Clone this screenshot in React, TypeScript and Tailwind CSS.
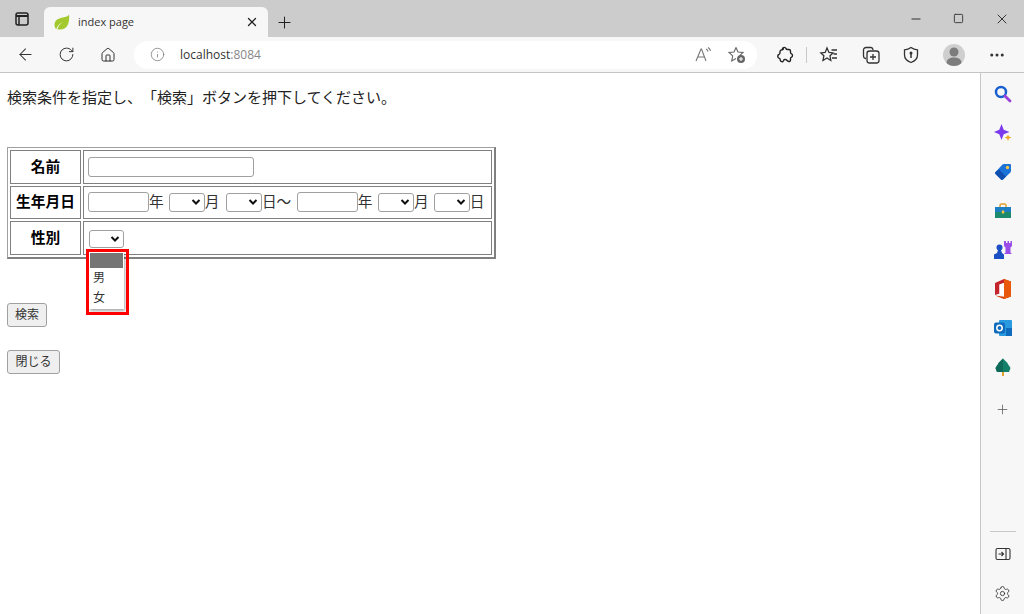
import { ArrowLeft, Ellipsis, House, Info, Minus, Plus, RotateCw, Settings, Square, X } from "lucide-react";
import type { ReactNode } from "react";

const cjk = { fontFamily: '"Liberation Sans", "Noto Sans CJK JP", sans-serif' };

function Slot(p: { className: string; children: ReactNode }) {
  return <div className={`flex shrink-0 items-center justify-center ${p.className}`}>{p.children}</div>;
}

function Leaf() {
  return (
    <svg width="16" height="16" viewBox="0 0 16 16">
      <path d="M15 .5C14 2.500 12 3 9 3.500 4 4.300.5 6.500.5 11c0 1.700.7 3.200 1.700 4.200C3 13 5 9.500 9 8 6 10 4 12.500 3.500 15.300 8 16.300 12.500 14.500 14.200 10c.9-3 1.300-6 .8-9.500z" fill="#a3c92e" />
    </svg>
  );
}

function TabActions() {
  return (
    <svg width="16" height="16" viewBox="0 0 16 16" fill="none" stroke="#222" strokeWidth="1.500">
      <rect x="2" y="2" width="12" height="12" rx="2" />
      <path d="M2 5h12" strokeWidth="2" />
      <path d="M5 5v9" />
    </svg>
  );
}

function ReadAloud() {
  return (
    <svg width="18" height="18" viewBox="0 0 18 18" fill="none" stroke="#777" strokeWidth="1.100">
      <path d="M2 15 7 3h.5l4.500 12M4 11h6.500" />
      <path d="M12 3c1 .5 1.600 1.300 2 2.500M14 1.500c1.400.8 2.200 2 2.500 3.500" />
    </svg>
  );
}

function FavAdd() {
  return (
    <svg width="20" height="20" viewBox="0 0 20 20" fill="none" stroke="#666" strokeWidth="1.100">
      <path d="M9 2.500 11 7l5 .5-3.600 3.300" />
      <path d="M9 2.500 7 7l-5 .5 3.700 3.400L4.700 16 9 13.500" />
      <circle cx="14" cy="14" r="4" fill="#666" stroke="none" />
      <path d="M14 12v4M12 14h4" stroke="#fff" />
    </svg>
  );
}

function ExtensionIcon() {
  return (
    <svg width="20" height="20" viewBox="0 0 20 20" fill="none" stroke="#222" strokeWidth="1.400" strokeLinejoin="round">
      <path d="M7.500 3.500c.5-1.500 3-1.500 3.500 0 .2.700.8 1 1.500 1h1.500c.8 0 1.500.7 1.500 1.500v1.500c0 .7.300 1.200 1 1.400 1.300.5 1.300 2.700 0 3.200-.7.200-1 .7-1 1.400V15c0 1-.8 1.700-1.700 1.500-1.200-.3-1.800-.8-2.300-1.500-.7-1-2.800-.7-3 .7-.2.900-1 1.300-1.800 1-.9-.3-1.500-1-1.500-2 0-.9-.5-1.300-1.200-1.500-1.500-.5-1.700-3-.2-3.700.8-.4 1.400-1 1.200-2-.2-1.500.5-2.500 2-2.700.8-.1 1-.3 1.500-.8z" />
    </svg>
  );
}

function FavList() {
  return (
    <svg width="20" height="20" viewBox="0 0 20 20" fill="none" stroke="#333" strokeWidth="1.300">
      <path d="M8 3 10 7.500l4 .4-3 2.800.8 4.800L8 13l-4 2.500.9-4.800-3-2.800 4.300-.4z" />
      <path d="M12.500 5H18M14.500 9H18M13 13h5" />
    </svg>
  );
}

function Collections() {
  return (
    <svg width="20" height="20" viewBox="0 0 20 20" fill="none" stroke="#333" strokeWidth="1.300">
      <path d="M5 13.500A2.500 2.500 0 0 1 2.500 11V5A2.500 2.500 0 0 1 5 2.500h5A2.500 2.500 0 0 1 12 5" />
      <rect x="6" y="6" width="12" height="12" rx="2.500" />
      <path d="M12 9v6M9 12h6" />
    </svg>
  );
}

function Shield() {
  return (
    <svg width="20" height="20" viewBox="0 0 20 20" fill="none" stroke="#333" strokeWidth="1.300">
      <path d="M10 2.500c2 1.500 4 2.200 6.500 2.300V10c0 3.500-2.500 6-6.500 7.500C6 16 3.500 13.500 3.500 10V4.800C6 4.700 8 4 10 2.500z" />
      <path d="M10 8v5" strokeWidth="1.500" />
      <circle cx="10" cy="8" r="1.500" fill="#333" stroke="none" />
    </svg>
  );
}

function Avatar() {
  return (
    <svg width="22" height="22" viewBox="0 0 22 22">
      <circle cx="11" cy="11" r="11" fill="#cfcfcf" />
      <circle cx="11" cy="8" r="4.500" fill="#7d7d7d" />
      <path d="M3.500 19c0-4 3.500-5.500 7.500-5.500s7.500 1.500 7.500 5.500c-2 2-4.500 3-7.500 3s-5.500-1-7.500-3z" fill="#7d7d7d" />
    </svg>
  );
}

function SearchColor() {
  return (
    <svg width="18" height="18" viewBox="0 0 18 18" fill="none">
      <circle cx="7" cy="7" r="5" stroke="#1a5fd0" strokeWidth="2.500" />
      <path d="m11 11 5 5" stroke="#9a3fd8" strokeWidth="2.800" strokeLinecap="round" />
    </svg>
  );
}

function Sparkle() {
  return (
    <svg width="18" height="18" viewBox="0 0 18 18">
      <path d="M7.500 0 9.700 5.800 15.500 8 9.700 10.200 7.500 16 5.300 10.200 0 8l5.300-2.200z" fill="#7c3aed" />
      <path d="M14 10.500l1 2 2.400 1-2.400 1-1 2.500-1-2.500-2.400-1 2.400-1z" fill="#f5a623" />
    </svg>
  );
}

function Tag() {
  return (
    <svg width="18" height="18" viewBox="0 0 18 18">
      <path d="M10 1h6a1 1 0 0 1 1 1v6a2 2 0 0 1-.6 1.400L9 16.500a1.500 1.500 0 0 1-2 0L1.500 11a1.500 1.500 0 0 1 0-2l7-7.400A2 2 0 0 1 10 1z" fill="#1b73d8" />
      <path d="M1.500 11 7 16.500a1.500 1.500 0 0 0 2 0l3-3L5 6.500l-3.500 2.500a1.500 1.500 0 0 0 0 2z" fill="#0f4fb0" />
      <circle cx="13.500" cy="4.500" r="1.700" fill="#f6c445" />
    </svg>
  );
}

function Toolbox() {
  return (
    <svg width="18" height="18" viewBox="0 0 18 18">
      <path d="M6 5V3.500A1.500 1.500 0 0 1 7.500 2h3A1.500 1.500 0 0 1 12 3.500V5" fill="none" stroke="#e0a030" strokeWidth="1.500" />
      <path d="M1 5h16v5H1z" fill="#1c7fc4" />
      <path d="M1 10h16v6H1z" fill="#1c8a6c" />
      <rect x="7.800" y="8.500" width="2.400" height="3" fill="#f6c445" />
    </svg>
  );
}

function Games() {
  return (
    <svg width="18" height="18" viewBox="0 0 18 18">
      <path d="M10 0h2v2h1.500V0h1.500v2h1.500V0H18v5l-1.500 1.500v5L18 13h-8l1.500-1.500v-5L10 5z" fill="#9b4fe8" />
      <circle cx="5.500" cy="6.500" r="3" fill="#1d4fc4" />
      <path d="M4 9h3l1 3 2 1.500V18H0v-4.500l3-1.500z" fill="#1d4fc4" />
    </svg>
  );
}

function Office() {
  return (
    <svg width="18" height="20" viewBox="0 0 18 20">
      <path d="M10 0 1 4v12l4.500-1.500V5.500L10 4z" fill="#c4242c" />
      <path d="M10 0l7 2.500v15L10 20 1 16.500l9 1.200z" fill="#d83b01" />
      <path d="M10 0l7 2.500v15L10 20z" fill="#e8590c" />
      <path d="M5.500 5.500 10 4v12l-4.500-1.500z" fill="#fff" />
    </svg>
  );
}

function Outlook() {
  return (
    <svg width="18" height="18" viewBox="0 0 18 18">
      <rect x="5" y="1" width="13" height="16" rx="1" fill="#2a9ae0" />
      <path d="M12 9h6v8h-6z" fill="#0f6cbd" />
      <rect x="0" y="3.500" width="11" height="11" rx="2" fill="#0f6cbd" />
      <circle cx="5.500" cy="9" r="2.700" fill="none" stroke="#fff" strokeWidth="1.500" />
    </svg>
  );
}

function Tree() {
  return (
    <svg width="18" height="18" viewBox="0 0 18 18">
      <path d="M9 .5 13 4.500l3.500 5.500-1.500 4H3l-1.500-4L5 4.500z" fill="#14806a" />
      <path d="M9 .5 5 4.500 1.500 10 3 14h6z" fill="#0e6a58" />
      <path d="M8 14h2v4H8z" fill="#e0a030" />
    </svg>
  );
}

function PanelIcon() {
  return (
    <svg width="16" height="16" viewBox="0 0 16 16" fill="none" stroke="#333" strokeWidth="1.100">
      <rect x="1" y="2.500" width="14" height="11" rx="1.500" />
      <path d="M11 2.500v11M3.500 8h5M6.500 6l2 2-2 2" />
    </svg>
  );
}

function Chevron() {
  return (
    <svg width="10" height="6" viewBox="0 0 10 6" fill="none" stroke="#111" strokeWidth="2">
      <path d="m1.500 1 3.500 3.500L8.500 1" />
    </svg>
  );
}

function SelectBox(p: { w: string; h?: string }) {
  return (
    <div className={`flex shrink-0 items-center justify-end rounded-[3px] border border-[#a0a0a0] bg-white pr-[3px] ${p.h ?? "h-[19px]"} ${p.w}`}>
      <Chevron />
    </div>
  );
}

function TextBox(p: { w: string; h: string }) {
  return <input type="text" className={`shrink-0 rounded-[3px] border border-[#a0a0a0] bg-white ${p.h} ${p.w}`} />;
}

function Th(p: { children: ReactNode }) {
  return <th className="w-[71px] border border-[#808080] p-0 text-center text-[14.700px] font-bold text-black">{p.children}</th>;
}

function Cell(p: { children: ReactNode }) {
  return (
    <td className="w-[409px] border border-[#808080] p-0">
      <div className="flex items-center pl-[4px] text-[14.700px] text-[#333]">{p.children}</div>
    </td>
  );
}

function PageButton(p: { w: string; label: string }) {
  return (
    <button className={`block h-[24px] rounded-[3px] border border-[#a0a0a0] bg-[#efefef] text-center text-[12px] text-[#333] ${p.w}`}>
      {p.label}
    </button>
  );
}

export default function App() {
  return (
    <div className="flex h-[614px] w-[1024px] flex-col overflow-hidden bg-white [text-spacing-trim:space-all]" style={cjk}>
      <div className="flex h-[37px] shrink-0 items-end bg-[#cccccc]">
        <Slot className="h-[37px] w-[44px]"><TabActions /></Slot>
        <div className="flex h-[30px] w-[224px] items-center rounded-t-[6px] bg-[#f7f7f7] pl-[10px]">
          <Leaf />
          <span className="ml-[8px] text-[11px] text-[#333]" style={{ fontFamily: '"Open Sans", sans-serif' }}>index page</span>
          <X size={14} strokeWidth={2.200} className="ml-auto mr-[9px] text-[#222]" />
        </div>
        <Slot className="h-[30px] w-[32px]"><Plus size={19} strokeWidth={1.300} className="text-[#222]" /></Slot>
        <div className="ml-auto flex h-[37px]">
          <Slot className="w-[43px]"><Minus size={14} strokeWidth={1.800} className="text-[#333]" /></Slot>
          <Slot className="w-[43px]"><Square size={11} strokeWidth={2} className="text-[#333]" /></Slot>
          <Slot className="mr-[1px] w-[43px]"><X size={16} strokeWidth={1.500} className="text-[#333]" /></Slot>
        </div>
      </div>

      <div className="flex h-[36px] shrink-0 items-center border-b border-[#c4c4c4] bg-[#f7f7f7] pl-[5px]">
        <Slot className="w-[41px]"><ArrowLeft size={19} strokeWidth={1.300} className="text-[#333]" /></Slot>
        <Slot className="w-[41px]"><RotateCw size={17} strokeWidth={1.400} className="text-[#333]" /></Slot>
        <Slot className="w-[41px]"><House size={16} strokeWidth={1.500} className="text-[#333]" /></Slot>
        <div className="ml-[6px] flex h-[28px] w-[623px] items-center rounded-full bg-white pl-[16px]">
          <Info size={15} strokeWidth={1.200} className="text-[#777]" />
          <span className="ml-[15px] text-[12px] text-[#333]" style={{ fontFamily: '"Open Sans", sans-serif' }}>
            localhost<span className="text-[#888]">:8084</span>
          </span>
          <div className="ml-auto flex items-center pr-[3px]">
            <Slot className="w-[34px]"><ReadAloud /></Slot>
            <Slot className="w-[34px]"><FavAdd /></Slot>
          </div>
        </div>
        <Slot className="ml-[7px] w-[42px]"><ExtensionIcon /></Slot>
        <div className="h-[16px] w-px shrink-0 bg-[#c8c8c8]" />
        <Slot className="w-[44px]"><FavList /></Slot>
        <Slot className="w-[40px]"><Collections /></Slot>
        <Slot className="w-[40px]"><Shield /></Slot>
        <Slot className="w-[46px]"><Avatar /></Slot>
        <Slot className="w-[40px]"><Ellipsis size={18} strokeWidth={2} className="text-[#333]" /></Slot>
      </div>

      <div className="flex min-h-0 flex-1">
        <main className="min-w-0 flex-1 pt-[14px]">
          <p className="pl-[7px] text-[15px] leading-[22px] text-[#222]">
            検索条件を指定し、「検索」ボタンを押下してください。
          </p>
          <table className="ml-[7px] mt-[38px] border-separate border-spacing-[2px] border border-b-2 border-r-2 border-[#a0a0a0] border-b-[#808080] border-r-[#808080]">
            <tbody>
              <tr className="h-[34px]">
                <Th>名前</Th>
                <Cell><div className="pt-px"><TextBox w="w-[166px]" h="h-[20px]" /></div></Cell>
              </tr>
              <tr className="h-[33px]">
                <Th>生年月日</Th>
                <Cell>
                  <TextBox w="w-[61px]" h="h-[20px]" />
                  <span>年</span>
                  <div className="ml-[5px]"><SelectBox w="w-[36px]" /></div>
                  <span>月</span>
                  <div className="ml-[6.500px]"><SelectBox w="w-[36px]" /></div>
                  <span>日～</span>
                  <div className="ml-[5.500px]"><TextBox w="w-[61px]" h="h-[20px]" /></div>
                  <span>年</span>
                  <div className="ml-[5.500px]"><SelectBox w="w-[36px]" /></div>
                  <span>月</span>
                  <div className="ml-[5px]"><SelectBox w="w-[36px]" /></div>
                  <span>日</span>
                </Cell>
              </tr>
              <tr className="h-[34px]">
                <Th>性別</Th>
                <Cell>
                  <div className="relative ml-px mt-[2px]">
                    <SelectBox w="w-[35px]" h="h-[18px]" />
                    <div className="absolute left-0 top-[22px] h-[57px] w-[35px] bg-white text-[12px] leading-[20px] text-[#333] shadow-[1px_2px_3px_rgba(0,0,0,0.35)]">
                      <div className="mx-px mt-px h-[15px] bg-[#757575]" />
                      <div className="pl-[4px]">男</div>
                      <div className="pl-[4px]">女</div>
                    </div>
                    <div className="absolute -left-[3px] top-[19px] h-[66px] w-[43px] border-[3px] border-[#ff0000]" />
                  </div>
                </Cell>
              </tr>
            </tbody>
          </table>
          <div className="mt-[44px] pl-[7px]"><PageButton w="w-[40px]" label="検索" /></div>
          <div className="mt-[23px] pl-[7px]"><PageButton w="w-[53px]" label="閉じる" /></div>
        </main>

        <aside className="flex w-[44px] shrink-0 flex-col items-center border-l border-[#c8c8c8] bg-[#f7f7f7] pt-[1px]">
          <Slot className="h-[39px]"><SearchColor /></Slot>
          <Slot className="h-[39px]"><Sparkle /></Slot>
          <Slot className="h-[39px]"><Tag /></Slot>
          <Slot className="h-[39px]"><Toolbox /></Slot>
          <Slot className="h-[39px]"><Games /></Slot>
          <Slot className="h-[39px]"><Office /></Slot>
          <Slot className="h-[39px]"><Outlook /></Slot>
          <Slot className="h-[39px]"><Tree /></Slot>
          <Slot className="h-[47px]"><Plus size={15} strokeWidth={1.200} className="text-[#555]" /></Slot>
          <div className="mt-auto h-px w-[26px] bg-[#c8c8c8]" />
          <Slot className="h-[43px]"><PanelIcon /></Slot>
          <Slot className="mb-[2px] h-[37px]"><Settings size={17} strokeWidth={1.200} className="text-[#333]" /></Slot>
        </aside>
      </div>
    </div>
  );
}
